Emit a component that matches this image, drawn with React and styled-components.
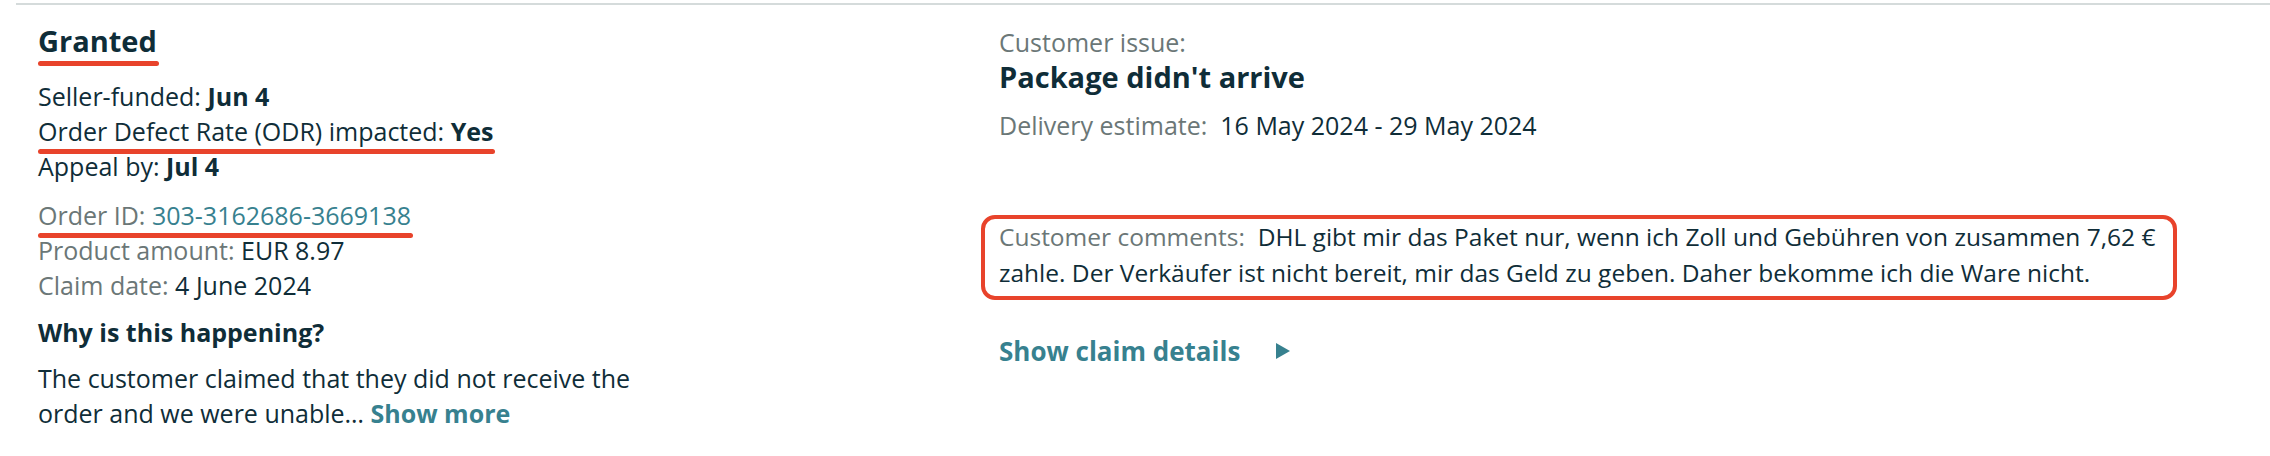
import React from 'react';
import styled, { createGlobalStyle } from 'styled-components';

const Global = createGlobalStyle`
  html, body { margin: 0; padding: 0; background: #ffffff; }
  body {
    font-family: "Open Sans", "Noto Sans", sans-serif;
    color: #0f2d38;
    -webkit-font-smoothing: antialiased;
  }
`;

const Card = styled.section`
  margin: 3px 0 0 16px;
  border-top: 2px solid #d5dbdb;
  padding-left: 22px;
  display: grid;
  grid-template-columns: 961px 1fr;
  align-items: start;
`;

const Column = styled.div`
  display: flex;
  flex-direction: column;
  align-items: flex-start;
`;

const Heading = styled.h2`
  margin: ${p => p.$top || 0}px 0 0;
  font-size: 29px;
  line-height: 40px;
  font-weight: 700;
  color: #0f2d38;
`;

const Line = styled.div`
  margin-top: ${p => p.$top || 0}px;
  font-size: 25px;
  line-height: 35px;
  color: #0f2d38;
  white-space: nowrap;
`;

const Caption = styled.div`
  margin-top: ${p => p.$top || 0}px;
  font-size: 25px;
  line-height: 29px;
  color: #6b7777;
`;

const Label = styled.span`
  color: #6b7777;
`;

const Strong = styled.b`
  font-weight: 700;
`;

const Link = styled.a`
  color: #37818f;
  text-decoration: none;
  font-weight: ${p => (p.$bold ? 700 : 400)};
  cursor: pointer;
`;

const Marked = styled.span`
  position: relative;
  display: inline-block;
  &::after {
    content: '';
    position: absolute;
    left: 0;
    right: -2px;
    bottom: -5px;
    height: 5px;
    border-radius: 3px;
    background: #e8432b;
  }
`;

const Subheading = styled.h3`
  margin: ${p => p.$top || 0}px 0 0;
  font-size: 25px;
  line-height: 35px;
  font-weight: 700;
`;

const Description = styled.p`
  margin: ${p => p.$top || 0}px 0 0;
  font-size: 25px;
  line-height: 35px;
  max-width: 640px;
`;

const CommentBox = styled.div`
  margin: ${p => p.$top || 0}px 0 0 -18px;
  border: 4px solid #e8432b;
  border-radius: 14px;
  padding: 0 18px 5px 14px;
  font-size: 24.5px;
  line-height: 36px;
  width: fit-content;
`;

const ToggleRow = styled.div`
  margin-top: ${p => p.$top || 0}px;
  display: flex;
  align-items: center;
  gap: 36px;
  font-size: 26px;
  line-height: 36px;
`;

const Caret = () => (
  <svg width="14" height="16" viewBox="0 0 14 16" aria-hidden="true">
    <polygon points="0,0 14,8 0,16" fill="#37818f" />
  </svg>
);

export default function App() {
  return (
    <>
      <Global />
      <Card>
        <Column>
          <Heading $top={16}>
            <Marked>Granted</Marked>
          </Heading>
          <Line $top={18}>
            Seller-funded: <Strong>Jun 4</Strong>
          </Line>
          <Line>
            <Marked>
              Order Defect Rate (ODR) impacted: <Strong>Yes</Strong>
            </Marked>
          </Line>
          <Line>
            Appeal by: <Strong>Jul 4</Strong>
          </Line>
          <Line $top={14}>
            <Marked>
              <Label>Order ID: </Label>
              <Link>303-3162686-3669138</Link>
            </Marked>
          </Line>
          <Line>
            <Label>Product amount: </Label>EUR 8.97
          </Line>
          <Line>
            <Label>Claim date: </Label>4 June 2024
          </Line>
          <Subheading $top={12}>Why is this happening?</Subheading>
          <Description $top={11}>
            The customer claimed that they did not receive the order and we were unable…{' '}
            <Link $bold>Show more</Link>
          </Description>
        </Column>
        <Column>
          <Caption $top={23}>Customer issue:</Caption>
          <Heading>Package didn't arrive</Heading>
          <Line $top={11}>
            <Label>Delivery estimate:{'\u00a0 '}</Label>16 May 2024 - 29 May 2024
          </Line>
          <CommentBox $top={72}>
            <Label>Customer comments:{'\u00a0 '}</Label>DHL gibt mir das Paket nur, wenn ich Zoll und Gebühren von zusammen 7,62 €
            <br />
            zahle. Der Verkäufer ist nicht bereit, mir das Geld zu geben. Daher bekomme ich die Ware nicht.
          </CommentBox>
          <ToggleRow $top={33}>
            <Link $bold>Show claim details</Link>
            <Caret />
          </ToggleRow>
        </Column>
      </Card>
    </>
  );
}
